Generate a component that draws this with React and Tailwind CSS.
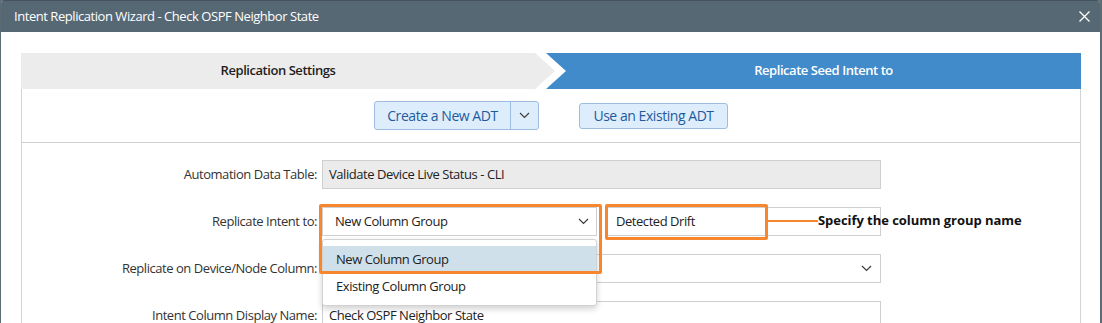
import { useState } from "react";

const Chevron = ({ className = "" }) => (
  <svg width="11" height="7" viewBox="0 0 11 7" className={className} fill="none">
    <path d="M1 1l4.5 4.5L10 1" stroke="#3c3c3c" strokeWidth="1.2" />
  </svg>
);

function FormRow({ label, children }) {
  return (
    <div className="flex items-center">
      <div className="w-[295px] text-right text-[13px] text-[#333]">{label}</div>
      <div className="ml-[5px] w-[559px]">{children}</div>
    </div>
  );
}

export default function App() {
  const [group] = useState("New Column Group");

  return (
    <div
      className="w-[1102px] h-[323px] overflow-hidden bg-[#5d6b75] pl-[1px] pr-[2px] tracking-[-0.45px]"
      style={{ fontFamily: '"Open Sans", "Liberation Sans", sans-serif' }}
    >
      <div className="h-full bg-white rounded-t-[4px] overflow-hidden">
        {/* title bar */}
        <header className="h-[32px] bg-[#566874] border-t border-[#46535c] flex items-center justify-between pl-[13px] pr-[10px]">
          <span className="text-white text-[13px]">Intent Replication Wizard - Check OSPF Neighbor State</span>
          <svg width="11" height="11" viewBox="0 0 11 11">
            <path d="M0.5 0.5l10 10M10.5 0.5l-10 10" stroke="#fff" strokeWidth="1.3" />
          </svg>
        </header>

        <div className="pt-[21px] pl-[20px]">
          {/* steps */}
          <div className="flex w-[1060px] h-[36px]">
            <div className="w-[534px] h-full bg-[#ececec] flex items-center justify-center [clip-path:polygon(0_0,514px_0,534px_50%,514px_100%,0_100%)]">
              <span className="text-[13px] font-semibold text-[#1e1e1e] pr-[20px]">Replication Settings</span>
            </div>
            <div className="flex-1 -ml-[9px] h-full bg-[#418bca] flex items-center justify-center pl-[20px] [clip-path:polygon(0_0,100%_0,100%_100%,0_100%,20px_50%)]">
              <span className="text-[13px] font-semibold text-white">Replicate Seed Intent to</span>
            </div>
          </div>

          {/* panel */}
          <section className="w-[1060px] h-[240px] border-x border-[#d4d4d4]">
            <div className="h-[54px] flex items-center justify-center gap-[40px] border-b border-[#d0d0d0]">
              <div className="flex h-[29px] rounded-[3px] border border-[#9dbde0] bg-[#deedfc] text-[#1f5b9c] text-[14px]">
                <button className="w-[136px] border-r border-[#9dbde0] flex items-center justify-center">Create a New ADT</button>
                <button className="w-[27px] flex items-center justify-center"><Chevron /></button>
              </div>
              <button className="h-[26px] w-[149px] rounded-[3px] border border-[#9dbde0] bg-[#deedfc] text-[#1f5b9c] text-[14px] flex items-center justify-center">
                Use an Existing ADT
              </button>
            </div>

            <div className="pt-[17px] flex flex-col gap-[18px]">
              <FormRow label="Automation Data Table:">
                <div className="h-[29px] border border-[#cfcfcf] bg-[#ebebeb] px-[6px] flex items-center text-[13px] text-[#222]">
                  Validate Device Live Status - CLI
                </div>
              </FormRow>

              <FormRow label="Replicate Intent to:">
                <div className="flex gap-[9px] relative">
                  <div className="relative flex-1">
                    <div className="h-[29px] border border-[#cfcfcf] bg-white pl-[12px] pr-[7px] flex items-center justify-between text-[13px] text-[#222]">
                      <span>{group}</span>
                      <Chevron />
                    </div>
                    <div className="absolute z-10 left-0 right-0 top-[32px] bg-white border border-[#d2d2d2] rounded-[3px] shadow-[0_3px_6px_rgba(0,0,0,0.18)] pt-[6px] pb-[5px] text-[13px] text-[#222]">
                      <div className="h-[27px] bg-[#d0e0ea] pl-[13px] flex items-center">New Column Group</div>
                      <div className="h-[27px] pl-[13px] flex items-center">Existing Column Group</div>
                    </div>
                    <div className="absolute z-20 -left-[3px] -top-[3px] w-[283px] h-[70px] border-[3px] border-[#f7862c] rounded-[2px]" />
                  </div>
                  <div className="relative flex-1">
                    <div className="h-[29px] border border-[#cfcfcf] bg-white px-[9px] flex items-center text-[13px] text-[#222]">
                      Detected Drift
                    </div>
                    <div className="absolute z-20 -left-[1px] -top-[3px] w-[163px] h-[36px] border-[3px] border-[#f7862c] rounded-[2px]" />
                    <div className="absolute z-20 left-[162px] top-[13px] w-[50px] h-[2px] bg-[#f7862c]" />
                    <span className="absolute z-20 left-[212px] top-[4px] whitespace-nowrap text-[13px] font-bold text-[#111] tracking-[-0.05px]">
                      Specify the column group name
                    </span>
                  </div>
                </div>
              </FormRow>

              <FormRow label="Replicate on Device/Node Column:">
                <div className="h-[29px] border border-[#cfcfcf] bg-white pr-[8px] flex items-center justify-end">
                  <Chevron />
                </div>
              </FormRow>

              <FormRow label="Intent Column Display Name:">
                <div className="h-[29px] border border-[#cfcfcf] bg-white px-[6px] flex items-center text-[13px] text-[#222]">
                  Check OSPF Neighbor State
                </div>
              </FormRow>
            </div>
          </section>
        </div>
      </div>
    </div>
  );
}
